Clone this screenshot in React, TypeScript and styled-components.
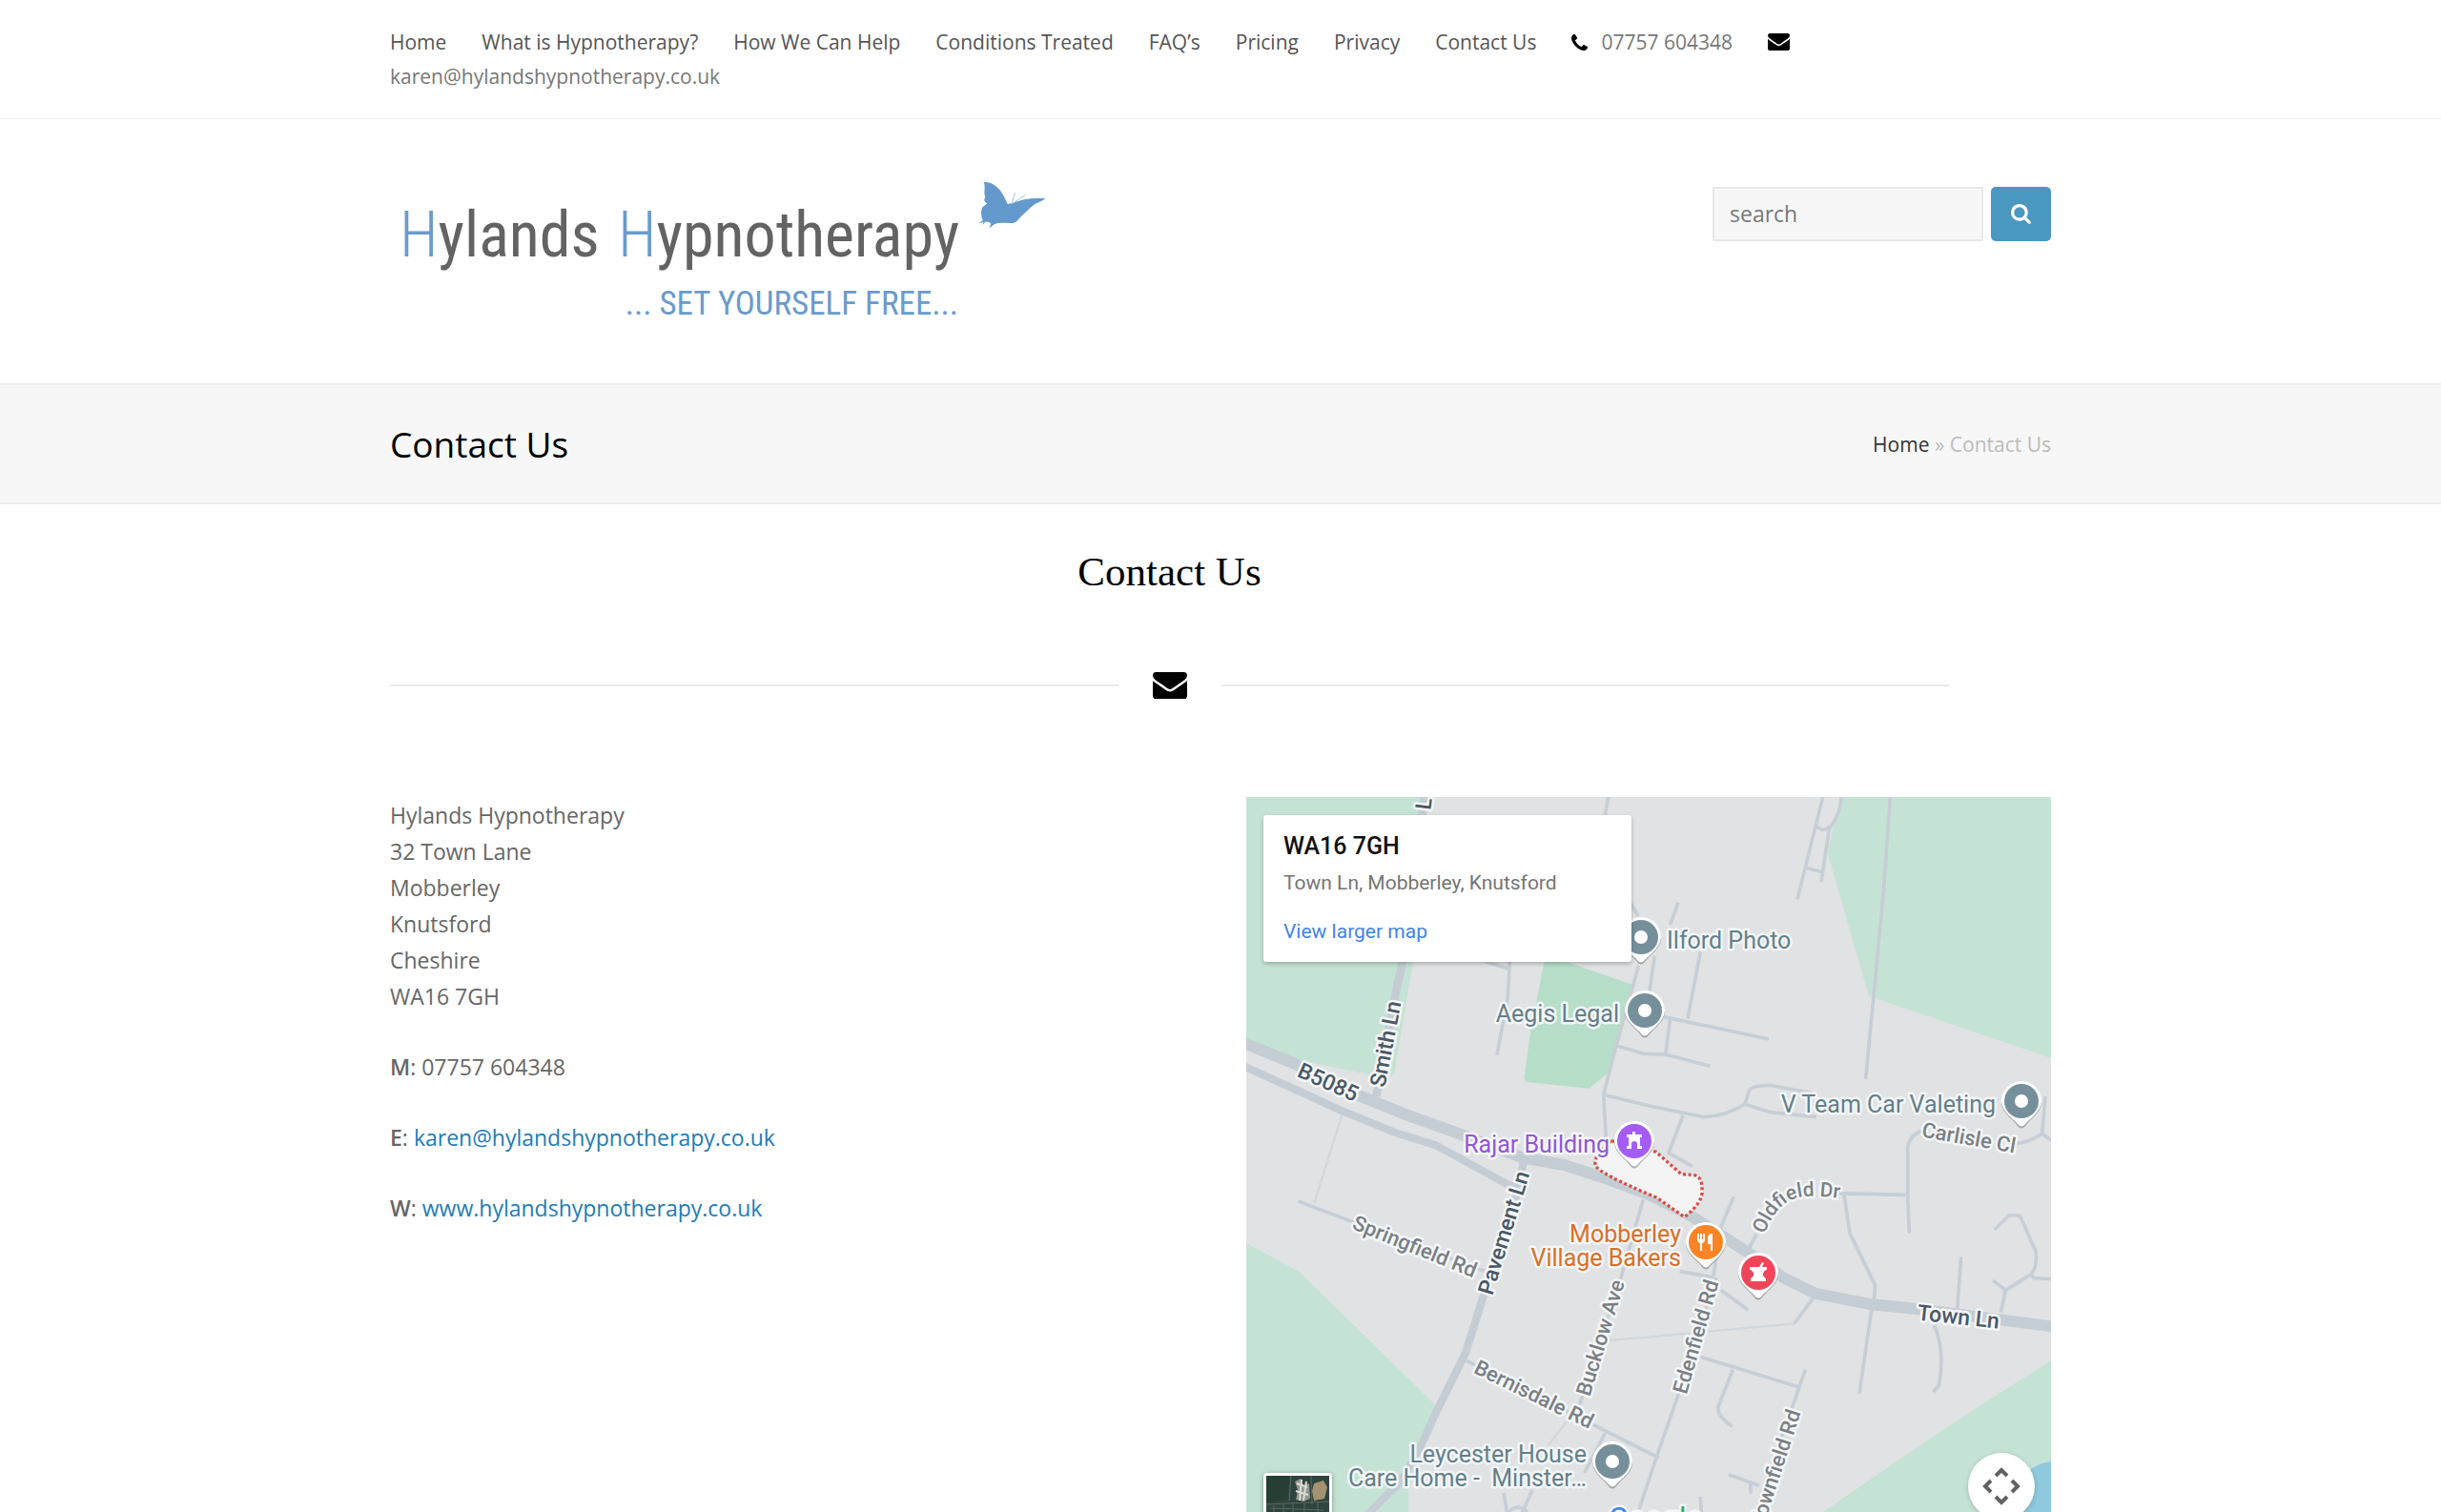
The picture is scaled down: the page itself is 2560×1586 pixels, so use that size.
import React from "react";
import styled, { createGlobalStyle } from "styled-components";

const GlobalStyle = createGlobalStyle`
  *, *::before, *::after { box-sizing: border-box; }
  body {
    margin: 0;
    background: #fff;
    color: #666;
    font-family: "Open Sans", "Noto Sans", sans-serif;
    font-size: 23px;
    line-height: 38px;
    overflow-x: hidden;
  }
  a { text-decoration: none; }
`;

const Container = styled.div`
  width: 100%;
  max-width: 1742px;
  margin: 0 auto;
`;

/* Top bar */
const TopBar = styled.div`
  padding: 26px 0;
  border-bottom: 1px solid #eee;
`;
const TopNav = styled(Container).attrs({ as: "nav" })`
  display: flex;
  flex-wrap: wrap;
  align-items: center;
  column-gap: 37px;
  font-size: 21px;
  line-height: 36px;
`;
const TopLink = styled.a`
  color: #555;
`;
const TopContact = styled.span`
  display: inline-flex;
  align-items: center;
  gap: 14px;
  color: #777;
`;

/* Header */
const Header = styled(Container).attrs({ as: "header" })`
  display: flex;
  justify-content: space-between;
  align-items: flex-start;
  padding: 60px 0;
`;
const LogoLink = styled.a`
  display: block;
  height: 157px;
`;
const SearchForm = styled.form`
  display: flex;
  gap: 8px;
  padding-top: 11px;
`;
const SearchInput = styled.input`
  width: 284px;
  height: 57px;
  padding: 0 16px 2px;
  border: 2px solid #e8e8e8;
  border-radius: 0;
  background: #f7f7f7;
  color: #777;
  font: inherit;
  &::placeholder { color: #777; opacity: 1; }
`;
const SearchButton = styled.button`
  display: flex;
  align-items: center;
  justify-content: center;
  width: 63px;
  height: 57px;
  padding: 0;
  border: 0;
  border-radius: 5px;
  background: #4a97c2;
  color: #fff;
`;

/* Title band */
const Band = styled.div`
  border-top: 2px solid #eee;
  border-bottom: 2px solid #eee;
  background: #f7f7f7;
`;
const BandInner = styled(Container)`
  display: flex;
  align-items: center;
  justify-content: space-between;
  height: 123px;
`;
const PageTitle = styled.h1`
  margin: 0;
  color: #000;
  font-size: 37px;
  font-weight: 400;
  line-height: 48px;
`;
const Breadcrumb = styled.nav`
  color: #bbb;
  font-size: 21px;
  line-height: 36px;
  a { color: #333; }
`;

/* Content */
const Intro = styled.section`
  margin-right: 107px;
  padding-top: 43px;
`;
const Heading = styled.h2`
  margin: 0;
  color: #000;
  font-family: "Liberation Serif", serif;
  font-size: 43px;
  font-weight: 400;
  line-height: 56px;
  text-align: center;
`;
const Divider = styled.div`
  display: flex;
  align-items: center;
  gap: 36px;
  margin: 77px 0 103px;
  color: #000;
  &::before, &::after {
    content: "";
    flex: 1;
    height: 2px;
    background: #eaeaea;
  }
`;
const Columns = styled.div`
  display: grid;
  grid-template-columns: 1fr 1fr;
  gap: 54px;
`;
const Details = styled.address`
  font-style: normal;
`;
const Paragraph = styled.p`
  margin: 0 0 36px;
  strong { font-weight: 600; }
  a { color: #1c7db6; }
`;

/* Map */
const MapFrame = styled.section`
  position: relative;
  height: 750px;
  overflow: hidden;
  background: #e0e2e4;
  font-family: Roboto, sans-serif;
`;
const MapDrawing = styled.svg`
  display: block;
  width: 100%;
  height: 100%;
  text {
    paint-order: stroke;
    stroke: #f4f6f7;
    stroke-width: 5px;
    stroke-linejoin: round;
  }
`;
const InfoCard = styled.div`
  position: absolute;
  top: 19px;
  left: 18px;
  width: 386px;
  padding: 18px 21px;
  border-radius: 3px;
  background: #fff;
  box-shadow: 0 2px 4px rgba(0, 0, 0, 0.25);
  color: #757575;
  font-size: 21px;
  line-height: 28px;
  a { color: #3f84e5; }
`;
const InfoTitle = styled.div`
  margin-bottom: 9px;
  color: #111;
  font-size: 25px;
  font-weight: 500;
  line-height: 30px;
`;
const InfoText = styled.div`
  margin-bottom: 23px;
`;
const SatelliteButton = styled.button`
  position: absolute;
  left: 18px;
  bottom: -31px;
  width: 72px;
  height: 72px;
  padding: 0;
  overflow: hidden;
  border: 3px solid #fff;
  border-radius: 4px;
  box-shadow: 0 1px 5px rgba(0, 0, 0, 0.35);
  background: #2c3f3b;
  svg { display: block; }
`;
const CameraButton = styled.button`
  position: absolute;
  right: 17px;
  bottom: -8px;
  display: flex;
  align-items: center;
  justify-content: center;
  width: 70px;
  height: 70px;
  padding: 0;
  border: 0;
  border-radius: 50%;
  box-shadow: 0 1px 5px rgba(0, 0, 0, 0.2);
  background: #fff;
`;

function EnvelopeIcon({ width }: { width: number }) {
  return (
    <svg width={width} viewBox="0 256 1792 1408" fill="currentColor" color="#000" aria-hidden="true">
      <path d="M1792 710v794q0 66-47 113t-113 47h-1472q-66 0-113-47t-47-113v-794q44 49 101 87 362 246 497 345 57 42 92.5 65.5t94.5 48 110 24.5h2q51 0 110-24.5t94.5-48 92.5-65.5q170-123 498-345 57-39 100-87zm0-294q0 79-49 151t-122 123q-376 261-468 325-10 7-42.5 31t-54 38.5-52 32.5-57.5 27-50 9h-2q-23 0-50-9t-57.5-27-52-32.5-54-38.5-42.5-31q-91-64-262-182.5t-205-142.5q-62-42-117-115.5t-55-136.5q0-78 41.5-130t118.5-52h1472q65 0 112.5 47t47.5 113z" />
    </svg>
  );
}

function PhoneIcon() {
  return (
    <svg width="17" height="17" viewBox="0 128 1408 1408" fill="#000" aria-hidden="true">
      <path d="M1408 1240q0 27-10 70.5t-21 68.5q-21 50-122 106-94 51-186 51-27 0-53-3.5t-57.5-12.5-47-14.5-55.5-20.5-49-18q-98-35-175-83-127-79-264-216t-216-264q-48-77-83-175-3-9-18-49t-20.5-55.5-14.5-47-12.5-57.5-3.5-53q0-92 51-186 56-101 106-122 25-11 68.5-21t70.5-10q14 0 21 3 18 6 53 76 11 19 30 54t35 63.5 31 53.5q3 4 17.5 25t21.5 35.5 7 28.5q0 20-28.5 50t-62 55-62 53-28.5 46q0 9 5 22.5t8.5 20.5 14 24 11.5 19q76 137 174 235t235 174q2 1 19 11.5t24 14 20.5 8.5 22.5 5q18 0 46-28.5t53-62 55-62 50-28.5q14 0 28.5 7t35.5 21.5 25 17.5q25 15 53.5 31t63.5 35 54 30q70 35 76 53 3 7 3 21z" />
    </svg>
  );
}

function SearchIcon() {
  return (
    <svg width="21" height="21" viewBox="64 128 1664 1664" fill="currentColor" aria-hidden="true">
      <path d="M1216 832q0-185-131.5-316.5t-316.5-131.5-316.5 131.5-131.5 316.5 131.5 316.5 316.5 131.5 316.5-131.5 131.5-316.5zm512 832q0 52-38 90t-90 38q-54 0-90-38l-343-342q-179 124-399 124-143 0-273.5-55.5t-225-150-150-225-55.5-273.5 55.5-273.5 150-225 225-150 273.5-55.5 273.5 55.5 225 150 150 225 55.5 273.5q0 220-124 399l343 343q37 37 37 90z" />
    </svg>
  );
}

function Logo() {
  return (
    <svg width="700" height="157" viewBox="0 0 700 157" fontFamily='"Roboto Condensed", "Open Sans Condensed", sans-serif'>
      <g fontSize="66" fontWeight="400" fill="#636363">
        <text x="10" y="84"><tspan fill="#6a9bcd" fontWeight="300">H</tspan>ylands</text>
        <text x="239" y="84"><tspan fill="#6a9bcd" fontWeight="300">H</tspan>ypnotherapy</text>
      </g>
      <text x="596" y="145" textAnchor="end" fontSize="35" fill="#6a9bcd">... SET YOURSELF FREE...</text>
      <g transform="translate(351 -15) scale(.3333)" fill="#6499cd">
        <path d="M815 62C850 62 872 90 882 115L890 132 902 130C940 115 970 112 1010 115 1000 123 985 128 975 133 955 150 935 168 920 185 912 194 900 192 885 191 870 192 858 190 850 195L832 208 838 194C832 188 826 186 820 188L812 198 814 189 798 193 812 184C806 170 806 155 810 143L826 130C816 125 815 118 820 110 814 95 822 80 815 62Z" />
        <path d="M903 131 914 96M905 131 946 104" fill="none" stroke="#a9c5e2" strokeWidth="3" />
      </g>
    </svg>
  );
}

const majorRoads: [number, string][] = [
  [36, "M-10 773 159 842 349 937 509 1002 649 1052 869 1135 1000 1158 1130 1200 1269 1252 1389 1312 1499 1382 1599 1447 1689 1512 1789 1562 1969 1597 2119 1612 2540 1667"],
  [24, "M-10 846 169 927 299 987 469 1056 599 1097 709 1157 819 1217 865 1235"],
  [25, "M874 1140 829 1352 749 1562 689 1752 599 1932 549 2042 489 2150 380 2260"],
  [26, "M560 0 489 532 469 622 409 942"],
];

const minorRoads = [
  "M1139 0 1129 57M829 517 823 630 789 812M749 517 829 542",
  "M1200 320 1234 375M1234 532 1164 782 1124 937 1134 1110M1285 500 1269 610",
  "M1359 332 1334 402M1429 487 1389 697M1314 692 1644 762M1334 697 1319 810",
  "M1164 782 1250 808 1319 810 1459 847",
  "M1124 937 1269 972 1439 1007Q1510 1005 1569 967L1582 925Q1588 908 1649 907L1779 932M1569 967 1649 992 1794 1007",
  "M1374 1002 1329 1120 1404 1162",
  "M1814 0 1734 322M1872 0Q1872 50 1834 102L1809 267M1790 88Q1815 115 1836 92M1759 222 1814 237",
  "M2026 0 2005 300 1949 887",
  "M2514 942 2504 1060 2540 1085M2410 1092Q2460 1090 2504 1060M2124 1050Q2081 1070 2081 1110V1250L2086 1372",
  "M1849 1247 2074 1252M1881 1252 1899 1372 1979 1537 1974 1592M1969 1602 1929 1877",
  "M2354 1362 2399 1317H2434L2484 1430Q2490 1480 2469 1502L2389 1552 2374 1622M2349 1522 2389 1552M2469 1502 2479 1514 2540 1517",
  "M2249 1447 2237 1612M2164 1662Q2200 1740 2179 1852L2162 1872",
  "M1579 1427 1605 1375M1534 1257 1494 1352 1469 1512M1364 1492 1469 1512M1494 1552 1579 1615M1784 1577 1724 1657",
  "M1479 1512 1359 1882 1289 2082 1230 2260M689 1772 1299 2080M1129 2002 1064 2127",
  "M1249 1267 1179 1512 1049 1912M1429 1762 1739 1857M1759 1802 1600 2260M1531 1802 1484 1922Q1484 1950 1529 1980",
  "M1517 2132 1614 2167M1587 2157V2192M1429 2202 1432 2260M164 1272 334 1337 749 1492",
  "M810 2190 822 2260M900 2180 865 2260M825 2250Q855 2220 885 2250",
];

type LabelProps = { x: number; y: number; angle?: number; anchor?: "start" | "middle" | "end"; kind?: "street" | "major" | "poi"; color?: string; children: React.ReactNode };

const labelStyles = {
  poi: { size: 25, weight: 400, color: "#63808a" },
  street: { size: 22, weight: 500, color: "#7a8085" },
  major: { size: 23, weight: 500, color: "#4a5866" },
};

function Label({ x, y, angle = 0, anchor = "middle", kind = "street", color, children }: LabelProps) {
  const look = labelStyles[kind];
  return (
    <text x={x} y={y} textAnchor={anchor} fontSize={look.size} fontWeight={look.weight} fill={color ?? look.color}
      transform={angle ? `rotate(${angle} ${x} ${y})` : undefined} dy={angle ? 8 : 0}>
      {children}
    </text>
  );
}

function Pin({ x, y, color = "#76909b", children }: { x: number; y: number; color?: string; children?: React.ReactNode }) {
  return (
    <g transform={`translate(${x} ${y})`}>
      <path d="M-21 2A21 21 0 1 1 21 2C20 13 9 19 4 26Q0 31-4 26C-9 19-20 13-21 2Z" fill="#4d5960" opacity=".45" />
      <path d="M-21 0A21 21 0 1 1 21 0C20 12 9 18 4 24Q0 29-4 24C-9 18-20 12-21 0Z" fill="#fff" />
      <circle r="18" fill={color} />
      {children ?? <circle r="7" fill="#fff" />}
    </g>
  );
}

function TownMap() {
  return (
    <MapDrawing viewBox="0 0 844 750" preserveAspectRatio="xMidYMin slice">
      <g transform="scale(.33333)">
        <g fill="#c5e3d5">
          <path d="M0 0H575L525 520 465 875 380 872 150 825 0 775Z" />
          <path d="M1869 0 1829 177 1959 627 2540 824V0Z" />
          <path d="M0 1404 164 1492 599 1917 560 2030 510 2180V2260H0Z" />
          <path d="M2540 1768 2200 1985 1800 2260H2540Z" />
        </g>
        <path d="M937 520H1010L1219 592 1180 740 1139 867 1079 917 884 897Q870 890 876 872L894 742Z" fill="#b6dec9" />
        <path d="M2540 2090Q2480 2095 2455 2130L2425 2260H2540Z" fill="#8fc9dd" />
        <g fill="none" strokeLinejoin="round">
          <path d="M304 992 214 1277M1724 1657 1269 1699 1139 1710M1049 1912 949 2042" stroke="#d1d7db" strokeWidth="7" />
          <g stroke="#c7ced5" strokeWidth="11">
            {minorRoads.map((d) => <path key={d} d={d} />)}
          </g>
          {majorRoads.map(([width, d]) => <path key={d} d={d} stroke="#c5cdd4" strokeWidth={width} />)}
        </g>
        <path d="M1149 1082Q1090 1130 1099 1160 1110 1185 1290 1260L1379 1322Q1436 1275 1434 1242 1436 1195 1410 1190L1369 1187 1289 1117Z" fill="#f4f4f5" stroke="#dc4a41" strokeWidth="10" strokeDasharray="9 8" />
      </g>

      <Label x={186} y={7} angle={-83} kind="major">L</Label>
      <Label x={86} y={299} angle={24} kind="major">B5085</Label>
      <Label x={146} y={259} angle={-79} kind="major">Smith Ln</Label>
      <Label x={270} y={457} angle={-73} kind="major">Pavement Ln</Label>
      <Label x={747} y={545} angle={6} kind="major">Town Ln</Label>
      <Label x={177} y={471} angle={22}>Springfield Rd</Label>
      <Label x={302} y={626} angle={26}>Bernisdale Rd</Label>
      <Label x={371} y={567} angle={-73}>Bucklow Ave</Label>
      <Label x={471} y={566} angle={-74}>Edenfield Rd</Label>
      <Label x={574} y={643} angle={-72} anchor="end">Townfield Rd</Label>
      <Label x={758} y={357} angle={10}>Carlisle Cl</Label>
      <path id="oldfield" d="M543 459C551 440 560 426 576 421Q590 416 630 422" fill="none" />
      <text fontSize="21" fontWeight="500" fill="#7a8085"><textPath href="#oldfield">Oldfield Dr</textPath></text>

      <Label kind="poi" x={441} y={159} anchor="start">Ilford Photo</Label>
      <Label kind="poi" x={391} y={236} anchor="end">Aegis Legal</Label>
      <Label kind="poi" x={786} y={331} anchor="end">V Team Car Valeting</Label>
      <Label kind="poi" x={381} y={373} anchor="end" color="#8f57d8">Rajar Building</Label>
      <Label kind="poi" x={456} y={467} anchor="end" color="#d6702a">Mobberley</Label>
      <Label kind="poi" x={456} y={492} anchor="end" color="#d6702a">Village Bakers</Label>
      <Label kind="poi" x={357} y={698} anchor="end">Leycester House</Label>
      <Label kind="poi" x={357} y={723} anchor="end">Care Home -&nbsp; Minster…</Label>

      <Pin x={414} y={147} />
      <Pin x={418} y={224} />
      <Pin x={813} y={319} />
      <Pin x={384} y={697} />
      <Pin x={407} y={361} color="#a45cf5">
        <path d="M-8 8V5H-6V-4H-8V-7H-2V-10H1V-7H8V-4H6V5H8V8H3V3A3 3 0 0 0-3 3V8Z" fill="#fff" />
      </Pin>
      <Pin x={482} y={467} color="#fb8525">
        <path d="M-9-9H-7V-3H-6V-9H-4V-3H-3V-9H-1V-3Q-1 0-4 1V9H-6V1Q-9 0-9-3ZM7-9V9H5V2H2V-4Q2-9 7-9Z" fill="#fff" />
      </Pin>
      <Pin x={537} y={499} color="#f0465a">
        <path d="M-9-6H1L4-11 6-10 4-6H9V-3H8Q4 0 5 3 6 5 8 6V9H-8V6Q-6 5-5 3-4 0-8-3H-9Z" fill="#fff" />
      </Pin>

      <text x="380" y="767" fontSize="31" fontWeight="400">
        <tspan fill="#4285f4">G</tspan><tspan fill="#ea4335">o</tspan><tspan fill="#fbbc05">o</tspan><tspan fill="#4285f4">g</tspan><tspan fill="#34a853">l</tspan><tspan fill="#ea4335">e</tspan>
      </text>
    </MapDrawing>
  );
}

function SatelliteThumb() {
  return (
    <svg width="66" height="66" viewBox="0 0 66 66" aria-hidden="true">
      <rect width="66" height="66" fill="#30443f" />
      <path d="M0 0H24L22 24 0 28Z" fill="#263e33" />
      <path d="M50 8 60 5 64 12 61 24 50 26 48 16Z" fill="#a39370" />
      <path d="M30 6 36 3 39 10 45 8 46 24 39 27 31 25 33 15Z" fill="#8f9690" />
      <path d="M32 8 43 12M31 16 44 20M37 4 35 26M42 6 39 26" stroke="#dcdcd6" strokeWidth="2" />
      <path d="M26 0 24 26M47 0 48 30M0 30 66 27M4 34 60 36M8 31V40M18 30V40M28 29V40M40 29V40M54 28V40" stroke="#59695f" strokeWidth="1" />
    </svg>
  );
}

const links = ["Home", "What is Hypnotherapy?", "How We Can Help", "Conditions Treated", "FAQ’s", "Pricing", "Privacy", "Contact Us"];
const email = "karen@hylandshypnotherapy.co.uk";
const addressLines = ["Hylands Hypnotherapy", "32 Town Lane", "Mobberley", "Knutsford", "Cheshire", "WA16 7GH"];

export default function App() {
  return (
    <>
      <GlobalStyle />
      <TopBar>
        <TopNav>
          {links.map((label) => <TopLink key={label} href="#">{label}</TopLink>)}
          <TopContact><PhoneIcon />07757 604348</TopContact>
          <EnvelopeIcon width={23} />
          <TopContact>{email}</TopContact>
        </TopNav>
      </TopBar>

      <Header>
        <LogoLink href="#" aria-label="Hylands Hypnotherapy"><Logo /></LogoLink>
        <SearchForm role="search">
          <SearchInput type="text" placeholder="search" aria-label="search" />
          <SearchButton type="button" aria-label="Submit search"><SearchIcon /></SearchButton>
        </SearchForm>
      </Header>

      <Band>
        <BandInner>
          <PageTitle>Contact Us</PageTitle>
          <Breadcrumb aria-label="Breadcrumb"><a href="#">Home</a> » Contact Us</Breadcrumb>
        </BandInner>
      </Band>

      <Container as="main">
        <Intro>
          <Heading>Contact Us</Heading>
          <Divider><EnvelopeIcon width={36} /></Divider>
        </Intro>
        <Columns>
          <Details>
            <Paragraph>
              {addressLines.map((line) => <React.Fragment key={line}>{line}<br /></React.Fragment>)}
            </Paragraph>
            <Paragraph><strong>M</strong>: 07757 604348</Paragraph>
            <Paragraph><strong>E</strong>: <a href={`mailto:${email}`}>{email}</a></Paragraph>
            <Paragraph><strong>W</strong>: <a href="#">www.hylandshypnotherapy.co.uk</a></Paragraph>
          </Details>
          <MapFrame aria-label="Map">
            <TownMap />
            <InfoCard>
              <InfoTitle>WA16 7GH</InfoTitle>
              <InfoText>Town Ln, Mobberley, Knutsford</InfoText>
              <a href="#">View larger map</a>
            </InfoCard>
            <SatelliteButton type="button" aria-label="Show satellite imagery"><SatelliteThumb /></SatelliteButton>
            <CameraButton type="button" aria-label="Map camera controls">
              <svg width="44" height="44" viewBox="-22 -22 44 44" fill="none" stroke="#606266" strokeWidth="4" aria-hidden="true">
                <path d="M-6-11 0-17 6-11M-6 11 0 17 6 11M-11-6-17 0-11 6M11-6 17 0 11 6" />
              </svg>
            </CameraButton>
          </MapFrame>
        </Columns>
      </Container>
    </>
  );
}
